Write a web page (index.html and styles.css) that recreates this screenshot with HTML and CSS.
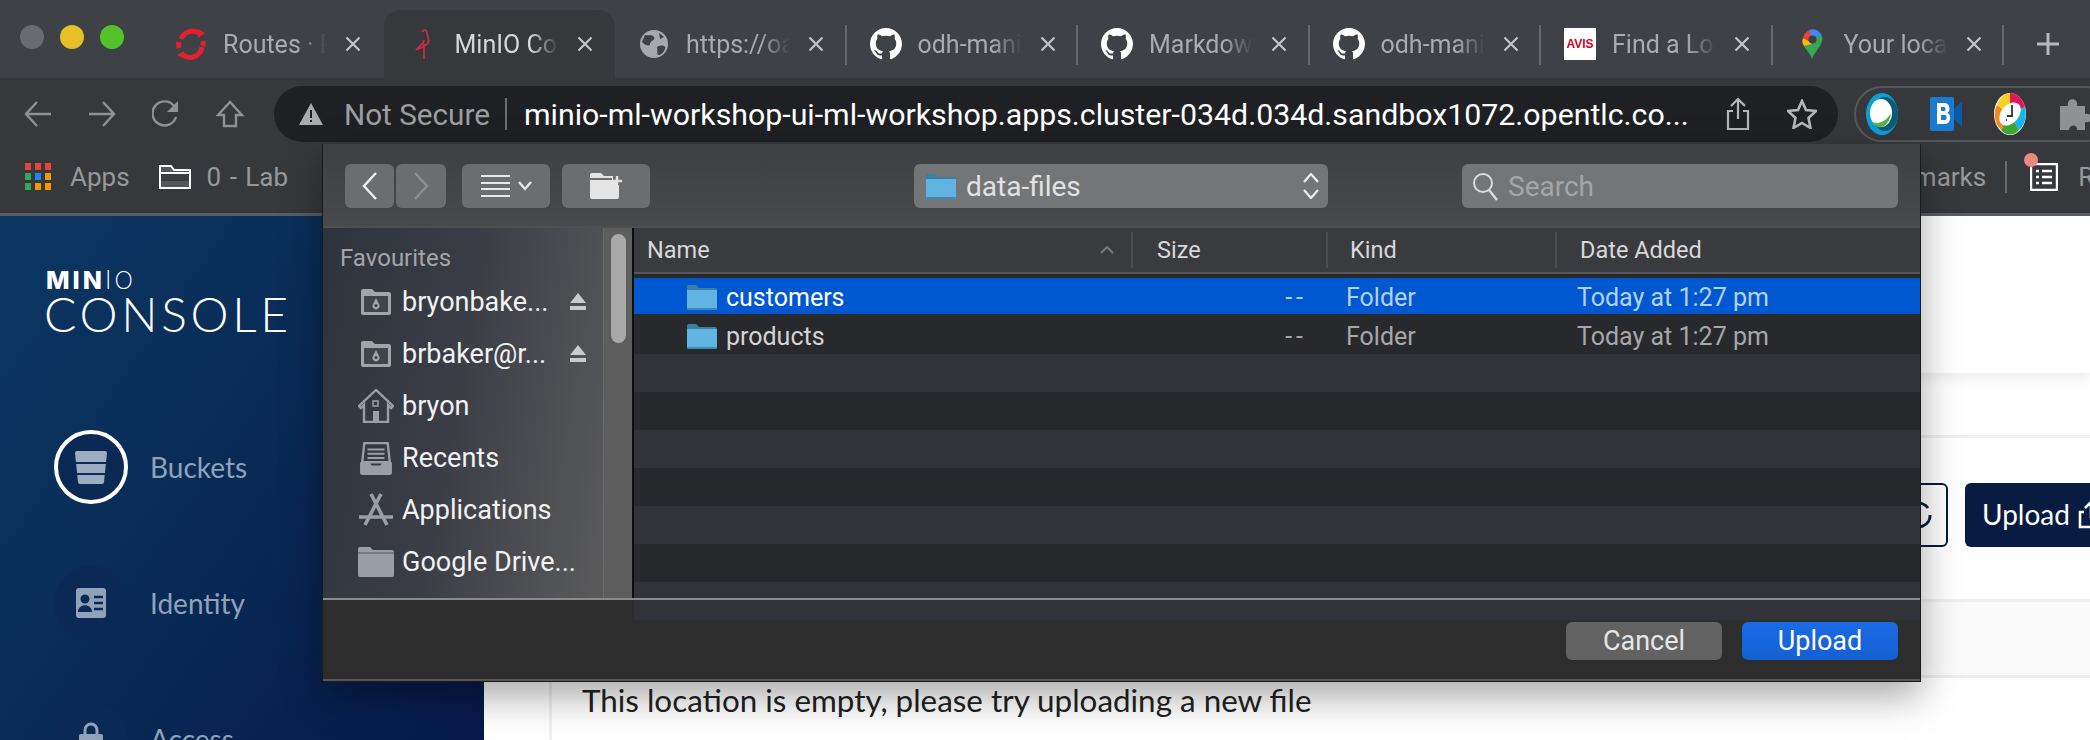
FILE: index.html
```html
<!DOCTYPE html>
<html lang="en">
<head>
    <meta charset="UTF-8">
    <meta name="viewport" content="width=device-width, initial-scale=1.0">
    <title>MinIO Console</title>
    <link rel="stylesheet" href="styles.css">
</head>
<body>
    <svg class="defs" width="0" height="0">
        <symbol id="gh" viewBox="0 0 16 16"><path fill="#fff" d="M8 0C3.58 0 0 3.58 0 8c0 3.54 2.29 6.53 5.47 7.59.4.07.55-.17.55-.38 0-.19-.01-.82-.01-1.49-2.01.37-2.53-.49-2.69-.94-.09-.23-.48-.94-.82-1.13-.28-.15-.68-.52-.01-.53.63-.01 1.08.58 1.23.82.72 1.21 1.87.87 2.33.66.07-.52.28-.87.51-1.07-1.78-.2-3.64-.89-3.64-3.95 0-.87.31-1.59.82-2.15-.08-.2-.36-1.02.08-2.12 0 0 .67-.21 2.2.82.64-.18 1.32-.27 2-.27.68 0 1.36.09 2 .27 1.53-1.04 2.2-.82 2.2-.82.44 1.1.16 1.92.08 2.12.51.56.82 1.27.82 2.15 0 3.07-1.87 3.75-3.65 3.95.29.25.54.73.54 1.48 0 1.07-.01 1.93-.01 2.2 0 .21.15.46.55.38A8.013 8.013 0 0016 8c0-4.42-3.58-8-8-8z"/></symbol>
        <symbol id="x" viewBox="0 0 16 16"><path d="M1.5 1.5l13 13M14.5 1.5l-13 13" stroke="currentColor" stroke-width="2.2" fill="none"/></symbol>
        <symbol id="blue-folder" viewBox="0 0 30 26"><path fill="#3d7ea3" d="M0 3a2 2 0 012-2h7l3 3h16a2 2 0 012 2v4H0z"/><path fill="#5fb4e2" d="M0 6h30v18a2 2 0 01-2 2H2a2 2 0 01-2-2z"/><path fill="#3f89b4" d="M0 24h30a2 2 0 01-2 2H2a2 2 0 01-2-2z"/></symbol>
        <symbol id="cloud-folder" viewBox="0 0 30 26"><path fill="#a0a4ab" d="M0 2a2 2 0 012-2h9l3 3h14a2 2 0 012 2v19a2 2 0 01-2 2H2a2 2 0 01-2-2z"/><path fill="#41444b" d="M3 7h24v16H3z"/><path fill="#a0a4ab" d="M15 9l3 6a3.500 3.500 0 11-6 0z"/><circle cx="15" cy="16.500" r="1.600" fill="#41444b"/></symbol>
        <symbol id="eject" viewBox="0 0 16 18"><path fill="#c9cacc" d="M8 0l8 10H0zM0 13h16v4H0z"/></symbol>
    </svg>

    <div class="tabstrip">
        <div class="lights">
            <span class="light light-grey"></span>
            <span class="light light-yellow"></span>
            <span class="light light-green"></span>
        </div>
        <div class="tab tab-nosep">
            <svg class="fav" viewBox="0 0 32 32"><path fill="none" stroke="#e5202e" stroke-width="5" d="M6 11a12 12 0 0119-5M27 19A12 12 0 018 27M4 20a13 13 0 010-6M28 13a13 13 0 010 5"/><path fill="#e5202e" d="M23 1l7 4-7 5zM9 23l1 8-8-4z"/></svg>
            <span class="tab-title">Routes · Red</span>
            <svg class="tab-x"><use href="#x"/></svg>
        </div>
        <div class="tab tab-nosep tab-active">
            <svg class="fav" viewBox="0 0 32 32"><path fill="none" stroke="#c72c48" stroke-width="1.800" d="M15 4c2-3 5-2 5 1 0 3 3 6 1 10-2 3-8 5-12 7 4-5 8-6 8-10M17 16v15"/></svg>
            <span class="tab-title">MinIO Console</span>
            <svg class="tab-x"><use href="#x"/></svg>
        </div>
        <div class="tab">
            <svg class="fav" viewBox="0 0 32 32"><circle cx="16" cy="16" r="14" fill="#a6a9ad"/><path fill="#3e4145" d="M7 7c3 1 7-1 9 2s-4 4-4 7-6 1-8-2zM19 19c3-2 7-2 8 0s-3 8-6 8-1-5-2-8zM21 5l5 4-4 2z"/></svg>
            <span class="tab-title">https://oauth</span>
            <svg class="tab-x"><use href="#x"/></svg>
        </div>
        <div class="tab">
            <svg class="fav"><use href="#gh"/></svg>
            <span class="tab-title">odh-manifests</span>
            <svg class="tab-x"><use href="#x"/></svg>
        </div>
        <div class="tab">
            <svg class="fav"><use href="#gh"/></svg>
            <span class="tab-title">Markdown</span>
            <svg class="tab-x"><use href="#x"/></svg>
        </div>
        <div class="tab">
            <svg class="fav"><use href="#gh"/></svg>
            <span class="tab-title">odh-manifests</span>
            <svg class="tab-x"><use href="#x"/></svg>
        </div>
        <div class="tab">
            <span class="fav fav-avis">AVIS</span>
            <span class="tab-title">Find a Location</span>
            <svg class="tab-x"><use href="#x"/></svg>
        </div>
        <div class="tab">
            <svg class="fav" viewBox="0 0 32 32">
                <path fill="#34a853" d="M16 31c-2-6-6-9-8-13l9-4 8 2c-2 5-7 9-9 15z"/>
                <path fill="#fbbc04" d="M8 18c-2-3-2-5-1-8l6 3 3 3z"/>
                <path fill="#ea4335" d="M7 10C8 6 10 4 13 2l5 6-4 5z"/>
                <path fill="#4285f4" d="M13 2c5-2 11 1 13 6l-8 5-2-3z"/>
                <path fill="#34a853" d="M26 8c1 3 0 6-1 8l-9-1 3-6z"/>
                <circle cx="16.500" cy="11.500" r="4" fill="#3c3f43"/>
            </svg>
            <span class="tab-title">Your location</span>
            <svg class="tab-x"><use href="#x"/></svg>
        </div>
        <svg class="newtab" viewBox="0 0 24 24"><path d="M12 1v22M1 12h22" stroke="#b6b8bb" stroke-width="3"/></svg>
    </div>

    <div class="toolbar">
        <svg class="nav-ico" viewBox="0 0 28 28"><path d="M27 14H2M13 2L2 14l11 12" fill="none" stroke="#8f9194" stroke-width="2.400"/></svg>
        <svg class="nav-ico" viewBox="0 0 28 28"><path d="M1 14h25M15 2l11 12-11 12" fill="none" stroke="#8f9194" stroke-width="2.400"/></svg>
        <svg class="nav-ico" viewBox="0 0 28 28"><path d="M22 6a12 12 0 102 11" fill="none" stroke="#8f9194" stroke-width="2.400"/><path d="M26 1v11H15z" fill="#8f9194"/></svg>
        <svg class="nav-ico" viewBox="0 0 28 28"><path d="M14 2L2 15h6v11h12V15h6z" fill="none" stroke="#8f9194" stroke-width="2.400"/></svg>
        <div class="urlbar">
            <svg class="warn" viewBox="0 0 24 22"><path fill="#a9abae" d="M12 0l12 22H0z"/><path fill="#1f2023" d="M11 7h2v8h-2zM11 17h2v2h-2z"/></svg>
            <span class="not-secure">Not Secure</span>
            <span class="url-sep"></span>
            <span class="url">minio-ml-workshop-ui-ml-workshop.apps.cluster-034d.034d.sandbox1072.opentlc.co...</span>
            <svg class="url-ico url-share" viewBox="0 0 24 34"><path d="M12 22V2M5 9l7-7 7 7M7 14H2v18h20V14h-5" fill="none" stroke="#b4b6b9" stroke-width="2.200"/></svg>
            <svg class="url-ico url-star" viewBox="0 0 30 30"><path d="M15 2l4 9 10 1-7.500 7 2 10-8.500-5-8.500 5 2-10L1 12l10-1z" fill="none" stroke="#b4b6b9" stroke-width="2.600"/></svg>
        </div>
        <div class="extensions">
            <svg class="ext" viewBox="0 0 32 42"><ellipse cx="16" cy="21" rx="16" ry="21" fill="#0b9ed8"/><ellipse cx="19" cy="21" rx="13" ry="17" fill="#0a5c74"/><ellipse cx="15" cy="20" rx="11" ry="14" fill="#fff"/><path d="M5 28c6 4 14 2 20-8-1 10-8 16-14 14z" fill="#5bb04a"/></svg>
            <svg class="ext" viewBox="0 0 32 42"><rect y="4" width="24" height="34" rx="2" fill="#1a7bd0"/><path d="M24 16l8-8v26l-8-8z" fill="#0b5aa8"/><path fill="#fff" d="M7 10h8c5 0 6 9 2 10 5 1 4 11-2 11H7zm4 4v4h3c2 0 2-4 0-4zm0 8v5h4c2 0 2-5 0-5z"/></svg>
            <svg class="ext" viewBox="0 0 32 42"><ellipse cx="16" cy="21" rx="16" ry="21" fill="#fff"/><path d="M16 0c7 0 12 5 15 14L16 21z" fill="#e3165b"/><path d="M31 14c2 9 0 18-6 23L16 21z" fill="#15b6f0"/><path d="M25 37c-5 6-13 6-18 0l9-16z" fill="#3fa535"/><path d="M7 37C0 30-1 20 3 12l13 9z" fill="#f28c1e"/><path d="M3 12C6 4 11 0 16 0v21z" fill="#f6d21f"/><ellipse cx="16" cy="21" rx="9" ry="13" fill="#fff" transform="rotate(40 16 21)"/><path d="M18 12v11h-5M12 27h1" stroke="#333" stroke-width="1.800" fill="none"/></svg>
            <svg class="ext" viewBox="0 0 32 36"><path fill="#8f9194" d="M2 10h8c-2-9 11-9 9 0h8v8c9-2 9 10 0 8v8H19c1-6-8-6-8 0H2z"/></svg>
        </div>
    </div>

    <div class="bookmarks">
        <span class="apps-grid">
            <i class="r"></i><i class="r"></i><i class="r"></i>
            <i class="g"></i><i class="b"></i><i class="o"></i>
            <i class="g"></i><i class="o"></i><i class="o"></i>
        </span>
        <span class="bm-label bm-apps">Apps</span>
        <svg class="bm-folder" viewBox="0 0 32 24"><path d="M1 23V1h11l3 4h16v18z" fill="#54565a" stroke="#fff" stroke-width="2"/><path d="M1 8h30" stroke="#fff" stroke-width="2"/><path d="M2 9h28v7H2z" fill="#3a3c40"/></svg>
        <span class="bm-label bm-lab">0 - Lab</span>
        <span class="bm-label bm-other">Other Bookmarks</span>
        <span class="bm-sep"></span>
        <span class="reading">
            <svg class="reading-ico" viewBox="0 0 28 28"><path d="M1 1h26v26H1z" fill="none" stroke="#fff" stroke-width="2.400"/><path d="M6 8h3M12 8h10M6 14h3M12 14h10M6 20h3M12 20h10" stroke="#fff" stroke-width="2.400"/></svg>
            <span class="reading-dot"></span>
        </span>
        <span class="bm-label">Reading List</span>
    </div>

    <div class="page">
        <aside class="nav">
            <div class="logo">
                <div class="logo-minio"><b>MIN</b>IO</div>
                <div class="logo-console">CONSOLE</div>
            </div>
            <div class="nav-item nav-item-active">
                <span class="nav-circle">
                    <svg width="32" height="33" viewBox="0 0 32 33"><path fill="#9badc2" d="M0 2a2 2 0 012-2h28a2 2 0 012 2l-3 29a2 2 0 01-2 2H5a2 2 0 01-2-2z"/><path d="M0 12h32M0 23h32" stroke="#0a2a55" stroke-width="2"/></svg>
                </span>
                <span class="nav-label">Buckets</span>
            </div>
            <div class="nav-item">
                <span class="nav-circle">
                    <svg width="30" height="30" viewBox="0 0 30 30"><rect width="30" height="30" rx="3" fill="#8ea2ba"/><circle cx="9" cy="11" r="4.500" fill="#0a2a55"/><path d="M2 24c0-9 14-9 14 0z" fill="#0a2a55"/><path d="M18 9h9M18 15h9M18 21h9" stroke="#0a2a55" stroke-width="2.400"/></svg>
                </span>
                <span class="nav-label">Identity</span>
            </div>
            <div class="nav-item">
                <span class="nav-circle">
                    <svg width="24" height="34" viewBox="0 0 24 34"><path d="M6 14V8a6 6 0 0112 0v6" fill="none" stroke="#8ea2ba" stroke-width="3"/><rect y="12" width="24" height="22" rx="2" fill="#8ea2ba"/><circle cx="12" cy="23" r="4" fill="#0a2a55"/></svg>
                </span>
                <span class="nav-label">Access</span>
            </div>
        </aside>
        <main class="content">
            <div class="content-head"></div>
            <div class="content-gap"></div>
            <div class="content-actions">
                <span class="btn btn-outline">
                    <svg width="30" height="30" viewBox="0 0 30 30"><path d="M26 15a11 11 0 01-20 7M4 15A11 11 0 0124 8" fill="none" stroke="#081c42" stroke-width="3"/></svg>
                </span>
                <span class="btn btn-solid">Upload
                    <svg width="26" height="30" viewBox="0 0 26 30"><path d="M13 19V3M7 9l6-6 6 6M6 13H2v15h22V13h-4" fill="none" stroke="#fff" stroke-width="2.600"/></svg>
                </span>
            </div>
            <div class="content-crumbs"></div>
            <div class="content-list">
                <p class="empty-msg">This location is empty, please try uploading a new file</p>
            </div>
        </main>
    </div>

    <div class="dialog">
        <div class="dlg-toolbar">
            <span class="dlg-btn dlg-back"><svg width="16" height="30" viewBox="0 0 16 30"><path d="M14 2L2 15l12 13" fill="none" stroke="#f0f0f0" stroke-width="2.400"/></svg></span>
            <span class="dlg-btn dlg-fwd"><svg width="16" height="30" viewBox="0 0 16 30"><path d="M2 2l12 13L2 28" fill="none" stroke="#8d8e90" stroke-width="2.400"/></svg></span>
            <span class="dlg-btn dlg-view">
                <svg width="30" height="24" viewBox="0 0 30 24"><path d="M0 2h29M0 9h29M0 15h29M0 22h29" stroke="#e8e8e8" stroke-width="1.800"/></svg>
                <svg width="14" height="10" viewBox="0 0 14 10"><path d="M1 1l6 7 6-7" fill="none" stroke="#e8e8e8" stroke-width="2.400"/></svg>
            </span>
            <span class="dlg-btn dlg-new">
                <svg width="34" height="26" viewBox="0 0 34 26"><path fill="#e4e4e4" d="M1 2a2 2 0 012-2h9l3 3h9v5h4v4h2v12a2 2 0 01-2 2H3a2 2 0 01-2-2z"/><path d="M28 3v10M23 8h10" stroke="#e4e4e4" stroke-width="2.400"/><path fill="#6b6c6e" d="M1 5h22v2H1z"/></svg>
            </span>
            <span class="path-popup">
                <svg class="ico-30" viewBox="0 0 30 26"><use href="#blue-folder"/></svg>
                <span class="path-name">data-files</span>
                <svg class="updown" width="16" height="26" viewBox="0 0 16 26"><path d="M1 9l7-8 7 8M1 17l7 8 7-8" fill="none" stroke="#efefef" stroke-width="2.200"/></svg>
            </span>
            <span class="search">
                <svg width="26" height="30" viewBox="0 0 26 30"><circle cx="11" cy="12" r="9" fill="none" stroke="#dcdcdc" stroke-width="2"/><path d="M17 19l8 10" stroke="#dcdcdc" stroke-width="2.400"/></svg>
                <span class="search-text">Search</span>
            </span>
        </div>
        <div class="dlg-body">
            <div class="places">
                <div class="places-title">Favourites</div>
                <div class="place">
                    <svg class="place-ico"><use href="#cloud-folder"/></svg>
                    <span class="place-name">bryonbake...</span>
                    <svg class="eject"><use href="#eject"/></svg>
                </div>
                <div class="place">
                    <svg class="place-ico"><use href="#cloud-folder"/></svg>
                    <span class="place-name">brbaker@r...</span>
                    <svg class="eject"><use href="#eject"/></svg>
                </div>
                <div class="place">
                    <svg class="place-ico place-ico-tall" viewBox="0 0 36 34"><path d="M18 1L1 17l2 2 3-3v17h24V16l3 3 2-2z" fill="none" stroke="#9a9ea6" stroke-width="2.400"/><path fill="#9a9ea6" d="M15 22h6v11h-6z"/><path fill="none" stroke="#9a9ea6" stroke-width="1.500" d="M15 12h5v5h-5z"/></svg>
                    <span class="place-name">bryon</span>
                </div>
                <div class="place">
                    <svg class="place-ico place-ico-tall" viewBox="0 0 32 32"><path d="M5 2h22l2 18H3z" fill="none" stroke="#9a9ea6" stroke-width="2.200"/><path d="M8 8h16M8 12h16M8 16h16" stroke="#9a9ea6" stroke-width="2"/><path fill="#9a9ea6" d="M1 20h9l2 3h8l2-3h9v10a2 2 0 01-2 2H3a2 2 0 01-2-2z"/></svg>
                    <span class="place-name">Recents</span>
                </div>
                <div class="place">
                    <svg class="place-ico place-ico-tall" viewBox="0 0 36 34"><path d="M13 1l16 31M23 1L7 32" stroke="#9a9ea6" stroke-width="3.600" fill="none"/><path d="M1 24h34" stroke="#9a9ea6" stroke-width="3.500"/></svg>
                    <span class="place-name">Applications</span>
                </div>
                <div class="place">
                    <svg class="place-ico place-ico-tall" viewBox="0 0 36 30"><path fill="#9a9ea6" d="M0 2a2 2 0 012-2h10l3 3h19a2 2 0 012 2v23a2 2 0 01-2 2H2a2 2 0 01-2-2z"/><path d="M0 6h36" stroke="#6a6e76" stroke-width="1.500"/></svg>
                    <span class="place-name">Google Drive...</span>
                </div>
                <div class="place">
                    <svg class="place-ico place-ico-tall" viewBox="0 0 36 30"><path fill="#9a9ea6" d="M0 2a2 2 0 012-2h10l3 3h19a2 2 0 012 2v23a2 2 0 01-2 2H2a2 2 0 01-2-2z"/></svg>
                </div>
            </div>
            <div class="places-scroll"><span class="scroll-thumb"></span></div>
            <div class="files">
                <div class="files-head">
                    <span class="col col-name">Name
                        <svg class="sort" width="14" height="8" viewBox="0 0 14 8"><path d="M1 7l6-6 6 6" fill="none" stroke="#77787c" stroke-width="2"/></svg>
                    </span>
                    <span class="col col-size">Size</span>
                    <span class="col col-kind">Kind</span>
                    <span class="col col-date">Date Added</span>
                </div>
                <div class="files-rows">
                    <div class="row row-selected">
                        <span class="cell-name"><svg class="ico-30" viewBox="0 0 30 26"><use href="#blue-folder"/></svg>customers</span>
                        <span class="cell-size">--</span>
                        <span class="cell-kind">Folder</span>
                        <span class="cell-date">Today at 1:27 pm</span>
                    </div>
                    <div class="row">
                        <span class="cell-name cell-name-plain"><svg class="ico-30" viewBox="0 0 30 26"><use href="#blue-folder"/></svg>products</span>
                        <span class="cell-size">--</span>
                        <span class="cell-kind">Folder</span>
                        <span class="cell-date">Today at 1:27 pm</span>
                    </div>
                    <div class="row row-alt"></div>
                    <div class="row"></div>
                    <div class="row row-alt"></div>
                    <div class="row"></div>
                    <div class="row row-alt"></div>
                    <div class="row"></div>
                    <div class="row row-alt"></div>
                </div>
            </div>
        </div>
        <div class="dlg-footer">
            <span class="dlg-action dlg-cancel">Cancel</span>
            <span class="dlg-action dlg-upload">Upload</span>
        </div>
    </div>
</body>
</html>
```

FILE: styles.css
```css
* {
    box-sizing: border-box;
}
html, body {
    margin: 0;
    height: 740px;
    overflow: hidden;
}
body {
    font-family: Roboto, "Liberation Sans", sans-serif;
    background-color: #fff;
    position: relative;
}
.defs {
    position: absolute;
}

/* tab strip */
.tabstrip {
    height: 78px;
    display: flex;
    align-items: flex-end;
    background-color: #3e4145;
}
.lights {
    width: 152px;
    height: 68px;
    display: flex;
    gap: 16px;
    padding: 15px 0 0 20px;
    align-self: flex-end;
}
.light {
    width: 24px;
    height: 24px;
    border-radius: 50%;
}
.light-grey { background-color: #696c6f; }
.light-yellow { background-color: #e6c029; }
.light-green { background-color: #53c22b; }
.tab {
    width: 231.5px;
    height: 68px;
    flex: none;
    display: flex;
    align-items: center;
    padding-left: 23px;
    position: relative;
    color: #a9abae;
}
.tab::after {
    content: "";
    position: absolute;
    right: 0;
    top: 15px;
    height: 40px;
    border-right: 2px solid #65686b;
}
.tab-nosep::after {
    display: none;
}
.tab-active {
    background-color: #36383c;
    border-radius: 16px 16px 0 0;
    color: #d6d7d8;
}
.fav {
    width: 32px;
    height: 32px;
    flex: none;
}
.fav-avis {
    background-color: #fff;
    color: #d4002a;
    font: bold 12px "Liberation Sans", sans-serif;
    display: flex;
    align-items: center;
    justify-content: center;
}
.tab-title {
    width: 104px;
    margin-left: 16px;
    font-size: 25px;
    white-space: nowrap;
    overflow: hidden;
    -webkit-mask-image: linear-gradient(to right, #000 72%, transparent 100%);
    mask-image: linear-gradient(to right, #000 72%, transparent 100%);
}
.tab-x {
    width: 16px;
    height: 16px;
    margin-left: 18px;
    color: #c4c5c7;
}
.newtab {
    width: 24px;
    height: 24px;
    margin: 0 0 22px 32px;
}

/* address row */
.toolbar {
    height: 66px;
    display: flex;
    align-items: flex-start;
    padding: 8px 0 0 24px;
    background-color: #36383c;
}
.nav-ico {
    width: 28px;
    height: 28px;
    margin: 14px 36px 0 0;
    flex: none;
}
.urlbar {
    width: 1564px;
    height: 56px;
    margin-left: -6px;
    flex: none;
    display: flex;
    align-items: center;
    padding-left: 25px;
    border-radius: 28px;
    background-color: #1f2023;
}
.warn {
    width: 24px;
    height: 22px;
    flex: none;
}
.not-secure {
    margin-left: 21px;
    font-size: 29.7px;
    color: #9c9ea1;
    white-space: nowrap;
}
.url-sep {
    width: 2px;
    height: 32px;
    margin: 0 17px 0 15px;
    background-color: #6a6c6f;
    flex: none;
}
.url {
    width: 1172px;
    flex: none;
    font-size: 30.3px;
    color: #fff;
    white-space: nowrap;
    overflow: hidden;
}
.url-ico {
    flex: none;
}
.url-share {
    width: 24px;
    height: 34px;
    margin-left: 30px;
}
.url-star {
    width: 30px;
    height: 30px;
    margin-left: 37px;
}
.extensions {
    width: 260px;
    height: 56px;
    margin-left: 16px;
    flex: none;
    display: flex;
    align-items: center;
    gap: 32px;
    padding-left: 10px;
    border: 2px solid #55585c;
    border-radius: 28px;
}
.ext {
    width: 32px;
    height: 42px;
    flex: none;
}

/* bookmarks */
.bookmarks {
    height: 72px;
    display: flex;
    align-items: center;
    padding: 0 0 4px 25px;
    background-color: #36383c;
    border-bottom: 3px solid #5a5c60;
    white-space: nowrap;
    overflow: hidden;
}
.apps-grid {
    width: 26px;
    height: 27px;
    flex: none;
    display: grid;
    grid-template-columns: repeat(3, 6px);
    grid-template-rows: repeat(3, 7px);
    gap: 3px 4px;
}
.apps-grid i { display: block; }
.apps-grid .r { background-color: #ea4335; }
.apps-grid .g { background-color: #34a853; }
.apps-grid .b { background-color: #1a84f0; }
.apps-grid .o { background-color: #f29900; }
.bm-label {
    font-size: 26px;
    color: #96989b;
}
.bm-apps {
    margin: 0 29px 0 19px;
}
.bm-lab {
    word-spacing: 2px;
}
.bm-folder {
    width: 32px;
    height: 24px;
    margin-right: 16px;
    flex: none;
}
.bm-other {
    margin-left: 1497px;
}
.bm-sep {
    width: 2px;
    height: 32px;
    margin: 0 23px 0 19px;
    background-color: #66686b;
    flex: none;
}
.reading {
    position: relative;
    display: flex;
    margin-right: 20px;
    flex: none;
}
.reading-ico {
    width: 28px;
    height: 28px;
}
.reading-dot {
    position: absolute;
    left: -6px;
    top: -10px;
    width: 14px;
    height: 14px;
    border-radius: 50%;
    background-color: #e88a7f;
}

/* page behind the dialog */
.page {
    display: flex;
    height: 524px;
    overflow: hidden;
}
.nav {
    width: 484px;
    flex: none;
    padding: 56px 0 0 54px;
    overflow: hidden;
    color: #fff;
    background: linear-gradient(125deg, #0d3763 0%, #082a55 50%, #07194a 100%);
}
.logo {
    margin-left: -8px;
    height: 158px;
}
.logo-minio {
    height: 16px;
    font: 200 25px/16px Inter, sans-serif;
    letter-spacing: 3px;
}
.logo-minio b {
    font-weight: 800;
}
.logo-console {
    font: 300 48px/36px Lato, sans-serif;
    letter-spacing: 3.7px;
    margin: 8px 0 0 -2px;
}
.nav-item {
    height: 136px;
    display: flex;
    align-items: flex-start;
}
.nav-circle {
    width: 74px;
    height: 74px;
    flex: none;
    display: flex;
    align-items: center;
    justify-content: center;
    border-radius: 50%;
    background-color: #0a2a55;
}
.nav-item-active .nav-circle {
    border: 4px solid #fff;
}
.nav-label {
    margin: 20px 0 0 22px;
    font: 28px Lato, sans-serif;
    color: #8ea2ba;
}
.content {
    flex: 1;
    display: flex;
    flex-direction: column;
    min-width: 0;
}
.content-head {
    height: 157px;
    flex: none;
    box-shadow: 0 6px 12px rgba(0, 0, 0, 0.07);
}
.content-gap {
    height: 65px;
    flex: none;
    border-bottom: 3px solid #f0f0f0;
}
.content-actions {
    height: 164px;
    flex: none;
    display: flex;
    align-items: flex-start;
    gap: 17px;
    padding: 45px 0 0 1394px;
    border-bottom: 3px solid #f0f0f0;
}
.btn {
    height: 64px;
    flex: none;
    display: flex;
    align-items: center;
    border-radius: 6px;
    font: 28px Lato, sans-serif;
}
.btn-outline {
    width: 70px;
    padding-left: 24px;
    border: 2px solid #081c42;
}
.btn-solid {
    width: 200px;
    gap: 8px;
    padding: 0 0 3px 17px;
    color: #fff;
    background-color: #081c42;
}
.content-crumbs {
    height: 76px;
    flex: none;
    margin-left: 65px;
    border-left: 3px solid #f0f0f0;
    border-bottom: 3px solid #ececec;
    background-color: #fafafa;
}
.content-list {
    flex: 1;
    margin-left: 65px;
    padding: 3px 0 0 30px;
    border-left: 3px solid #f0f0f0;
}
.empty-msg {
    margin: 0;
    font: 31.4px Lato, sans-serif;
    color: #222;
    white-space: nowrap;
}

/* save panel lies over the page */
.dialog {
    position: absolute;
    left: 322px;
    top: 144px;
    width: 1599px;
    height: 538px;
    display: flex;
    flex-direction: column;
    border: 1px solid #1a1a1a;
    border-top: none;
    background-color: #2d2d2d;
    box-shadow: 0 14px 36px rgba(0, 0, 0, 0.35);
    color: #eee;
}
.dlg-toolbar {
    height: 84px;
    flex: none;
    display: flex;
    align-items: flex-start;
    padding: 20px 22px 0;
    border-bottom: 2px solid #4f5053;
    background: linear-gradient(#3e3f41, #48494b);
}
.dlg-btn {
    height: 44px;
    display: flex;
    align-items: center;
    justify-content: center;
    gap: 7px;
    flex: none;
    border-radius: 6px;
    background-color: #6c6d6f;
}
.dlg-back { width: 49px; }
.dlg-fwd { width: 50px; margin-left: 2px; }
.dlg-view { width: 88px; margin-left: 16px; }
.dlg-new { width: 88px; margin-left: 12px; }
.path-popup {
    width: 414px;
    height: 44px;
    margin-left: 264px;
    flex: none;
    display: flex;
    align-items: center;
    padding: 0 9px 0 12px;
    border-radius: 6px;
    background-color: #747577;
}
.path-name {
    margin-left: 10px;
    font-size: 28px;
    color: #e2e2e2;
}
.updown {
    margin-left: auto;
}
.ico-30 {
    width: 30px;
    height: 26px;
    flex: none;
}
.search {
    width: 436px;
    height: 44px;
    margin-left: auto;
    display: flex;
    align-items: center;
    padding-left: 10px;
    border-radius: 6px;
    background-color: #747577;
}
.search-text {
    margin-left: 10px;
    font-size: 28px;
    color: #a4a5a7;
}
.dlg-body {
    height: 370px;
    flex: none;
    display: flex;
}
.places {
    width: 280px;
    flex: none;
    padding: 16px 0 0 17px;
    overflow: hidden;
    background: linear-gradient(100deg, #2f333c 0%, #3a3d45 45%, #5b5b5c 100%);
}
.places-title {
    height: 32px;
    font-size: 24px;
    color: #a3a5a9;
}
.place {
    height: 52px;
    display: grid;
    grid-template-columns: 62px 1fr;
    align-items: center;
    position: relative;
}
.place-ico {
    width: 30px;
    height: 26px;
    justify-self: end;
    margin-right: 11px;
}
.place-ico-tall {
    width: 36px;
    height: 34px;
    margin-right: 8px;
}
.place-name {
    font-size: 27px;
    color: #f2f2f2;
    white-space: nowrap;
}
.eject {
    position: absolute;
    left: 230px;
    top: 17px;
    width: 16px;
    height: 18px;
}
.places-scroll {
    width: 31px;
    flex: none;
    padding: 6px 0 0 7px;
    border-left: 1px solid #6a6a6b;
    border-right: 2px solid #0d0d0d;
    background-color: #5d5d5e;
}
.scroll-thumb {
    display: block;
    width: 15px;
    height: 109px;
    border-radius: 8px;
    background-color: #a9a9aa;
}
.files {
    flex: 1;
    min-width: 0;
}
.files-head {
    height: 46px;
    display: grid;
    grid-template-columns: 499px 195px 229px 1fr;
    align-items: center;
    border-bottom: 2px solid #55565a;
    background-color: #3a3b3f;
    font-size: 23.5px;
    color: #d8d8d8;
}
.col {
    height: 36px;
    display: flex;
    align-items: center;
    position: relative;
    border-right: 2px solid #4c4d51;
}
.col-name { padding-left: 13px; }
.col-size { padding-left: 24px; }
.col-kind { padding-left: 22px; }
.col-date { padding-left: 23px; border-right: none; }
.sort {
    position: absolute;
    right: 17px;
}
.files-rows {
    padding-top: 4px;
    background-color: #28292d;
}
.row {
    height: 38px;
    display: grid;
    grid-template-columns: 499px 195px 229px 1fr;
    align-items: center;
    padding-top: 2px;
    background-color: #28292d;
    font-size: 25px;
    color: #a6a7a9;
}
.row-selected {
    height: 36px;
    margin-bottom: 2px;
    background-color: #0058d0;
    color: #b5d0f3;
}
.row-alt {
    background-color: #323338;
}
.cell-name {
    display: flex;
    align-items: center;
    gap: 9px;
    padding-left: 53px;
    color: #fff;
}
.cell-name-plain {
    color: #d4d4d5;
}
.cell-size {
    padding-right: 21px;
    text-align: right;
    letter-spacing: 4px;
}
.cell-kind {
    padding-left: 18px;
}
.cell-date {
    padding-left: 20px;
}
.dlg-footer {
    flex: 1;
    display: flex;
    justify-content: flex-end;
    align-items: flex-start;
    gap: 20px;
    padding: 22px 22px 0 0;
    border-top: 2px solid #8a8a8a;
    border-bottom: 2px solid #555;
}
.dlg-action {
    width: 156px;
    height: 38px;
    display: flex;
    align-items: center;
    justify-content: center;
    border-radius: 6px;
    font-size: 27px;
}
.dlg-cancel {
    background-color: #626263;
    color: #e6e6e6;
}
.dlg-upload {
    background: linear-gradient(#1a6ae8, #1560d0);
    color: #fff;
}
```
